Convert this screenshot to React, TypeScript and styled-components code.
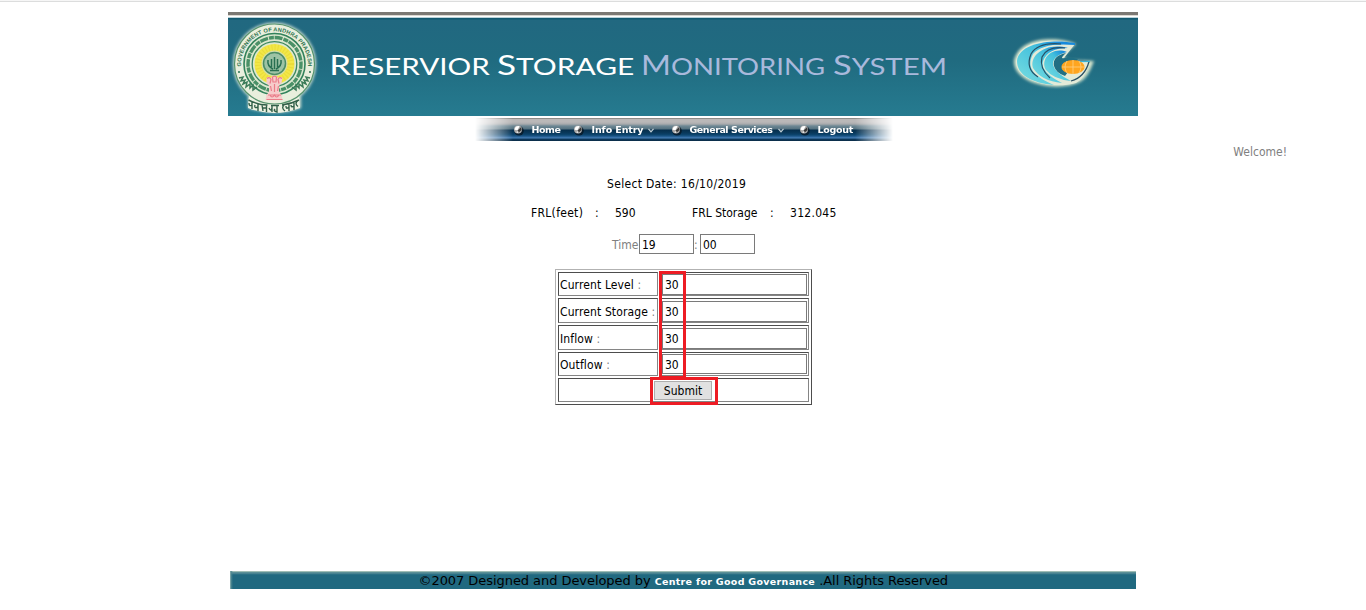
import React from 'react';
import styled, { createGlobalStyle } from 'styled-components';

const Global = createGlobalStyle`
  * { box-sizing: border-box; }
  body { margin: 0; background: #fff; font-family: 'DejaVu Sans Condensed', 'DejaVu Sans', sans-serif; font-stretch: condensed; font-size: 12px; color: #000; }
`;
const Page = styled.div`
  width: 1366px; height: 610px; display: flex; flex-direction: column; align-items: center; overflow: hidden;
`;
const TopStrip = styled.div`width: 100%; height: 2px; background: #f6f6f6; border-bottom: 1px solid #dcdddd; margin-bottom: 10px;`;
const Banner = styled.header`
  width: 910px; height: 104px; flex: none; border-top: 3px solid #7b7873;
  background: linear-gradient(#ded9d2 0 1px, #fff 1px 2px, #b9d3da 2px 3px, #12586f 3px 4px, #216880 5px, #206b80 45%, #267b90 100%);
`;
const MenuBar = styled.nav`
  width: 418px; height: 23px; margin: 2px 0 0 1px; padding-left: 38px; flex: none; display: flex; align-items: center;
  background: linear-gradient(#8d8b88 0 1px, #bab8b8 1px 4px, #a9abad 6px, #6d8794 8px, #54717f 11px, #062f4d 12px, #09395c 15px, #0c4670 17px, #2c659d 19px, #4a83b8 20px, #0c3a60 21px, #0a2b45 23px);
  mask-image: linear-gradient(90deg, transparent 0, #000 38px, #000 calc(100% - 38px), transparent 100%);
`;
const MenuItem = styled.a<{ $w: number; $ls?: string }>`
  width: ${p => p.$w}px; display: flex; align-items: center; color: #fff; font: bold 9.5px 'DejaVu Sans', sans-serif;
  letter-spacing: ${p => p.$ls ?? '0'}; white-space: nowrap;
  svg { flex: none; }
`;
const Welcome = styled.div`align-self: flex-end; margin-right: 79px; height: 22px; line-height: 22px; color: #808080;`;
const Line = styled.div<{ $left: number; $top: number }>`
  align-self: flex-start; margin: ${p => p.$top}px 0 0 ${p => p.$left}px; display: flex; height: 20px; line-height: 20px; white-space: pre;
`;
const Cell = styled.span<{ $w?: number; $gray?: boolean; $ls?: string }>`
  width: ${p => (p.$w ? p.$w + 'px' : 'auto')}; color: ${p => (p.$gray ? '#808080' : '#000')}; letter-spacing: ${p => p.$ls ?? '0'};
  ${p => p.$gray && 'line-height: 22px;'}
`;
const Input = styled.input<{ $w: string; $h: number }>`
  width: ${p => p.$w}; height: ${p => p.$h}px; border: 1px solid #7a7a7a; padding: 1px 2px 0; font: inherit; color: #000; background: #fff; outline: 0; border-radius: 0; display: block;
`;
const FormTable = styled.form`
  position: relative; align-self: flex-start; margin: 15px 0 0 555px; width: 257px; height: 136px; padding: 2px; border: 1px solid; border-color: #b2b2b2 #4d4d4d #4d4d4d #b2b2b2;
  display: grid; grid-template-columns: 100px 149px; grid-template-rows: 24px 25px 25px 24px 24px; gap: 2px;
`;
const FormCell = styled.div<{ $full?: boolean; $drop?: boolean }>`
  border: 1px solid; border-color: #4d4d4d #858585 #858585 #4d4d4d; padding: ${p => (p.$drop ? '2px 1px 0' : '1px')};
  display: flex; align-items: flex-start; white-space: nowrap;
  ${p => p.$full && 'grid-column: 1 / 3; padding: 2px 1px 0 95px;'}
  i { font-style: normal; color: #808080; white-space: pre; }
`;
const Label = styled.label`line-height: 23px; letter-spacing: 0.12px;`;
const Submit = styled.button`
  width: 58px; height: 19px; padding: 1px 0 0; border: 1px solid #adadad; background: #e1e1e1; font: inherit; color: #000;
`;
const Mark = styled.div<{ $x: number; $y: number; $w: number; $h: number }>`
  position: absolute; left: ${p => p.$x}px; top: ${p => p.$y}px; width: ${p => p.$w}px; height: ${p => p.$h}px; border: 3px solid #ed1c24; pointer-events: none;
`;
const Footer = styled.footer`
  width: 906px; height: 18px; flex: none; margin-top: 166px; padding-left: 188.500px; display: flex; white-space: pre; line-height: 19px;
  font-family: 'DejaVu Sans', sans-serif; font-stretch: normal; font-size: 13px; letter-spacing: -0.06px;
  background: linear-gradient(90deg, #9fbdb9 0, #4e8791 1px, transparent 3px), linear-gradient(#9fbdb5 0 1px, #5b8f97 1px 2px, #34768a 3px, #206980 4px);
`;
const Owner = styled.b`font-size: 9.5px; color: #fff; line-height: 21px; width: 160.500px; letter-spacing: 0.31px;`;

const Bullet = () => (
  <svg width="19" height="14" viewBox="0 0 19 14">
    <circle cx="6" cy="7.8" r="4.8" fill="#07131c" opacity=".7" />
    <circle cx="5" cy="6.6" r="4" fill="#a9a9a9" />
    <path d="M1.6 6.8A3.6 3.6 0 0 1 6.6 3.2L4.5 7.3Z" fill="#fff" />
    <path d="M4.6 7.4L8 4.2L8.6 7L5.5 9.8Z" fill="#373737" />
    <path d="M3.2 9.2L5.2 8L5.4 10.2Z" fill="#eee" />
  </svg>
);
const ChevronIcon = styled.svg`margin: 1px 0 0 5px;`;
const Chevron = () => <ChevronIcon width="6" height="5"><path d="M.5 .8l2.5 3L5.5 .8" fill="none" stroke="#c3d0d6" strokeWidth="1.2" /></ChevronIcon>;

const words: [string, string, number, number, string][] = [
  ['R', 'ESERVIOR', 101.3, 160.5, '#fff'], ['S', 'TORAGE', 269, 137.3, '#fff'],
  ['M', 'ONITORING', 413, 184, '#a9b9dc'], ['S', 'YSTEM', 605, 114, '#a9b9dc'],
];
const BannerSvg = styled.svg`display: block;`;
const BannerArt = () => (
  <BannerSvg width="910" height="101" viewBox="0 3 910 101">
    <defs>
      <path id="rim" d="M13.4 58A33.5 33.5 0 1 1 79.6 58" />
      <filter id="glow" x="-20%" y="-20%" width="140%" height="140%"><feGaussianBlur stdDeviation="1.5" /></filter>
      <linearGradient id="wave" x1="0" y1="1" x2="1" y2="0"><stop offset=".2" stopColor="#69d5df" /><stop offset=".6" stopColor="#42bfdd" /><stop offset=".85" stopColor="#1689dc" /></linearGradient>
    </defs>
    <g filter="url(#glow)" fill="#d2e2d4"><circle cx="46.5" cy="52" r="41.5" /><path d="M20 82h53v14q-26 9-53 0z" /></g>
    <path d="M21 83L20 96Q46 106 72 96L71 83z" fill="#edf2e2" />
    <circle cx="46.5" cy="52" r="40" fill="#e9efdd" stroke="#56936d" strokeWidth="1.2" />
    <circle cx="46.5" cy="52" r="30.5" fill="#dce8d0" stroke="#32825b" strokeWidth="1.6" />
    <circle cx="46.5" cy="52" r="26.5" fill="none" stroke="#4a9067" strokeWidth="3.4" strokeDasharray="5 .8 8 1" />
    <circle cx="46.5" cy="52" r="22.3" fill="none" stroke="#3d8861" strokeWidth="1.3" />
    <circle cx="46.5" cy="52" r="20" fill="#f2e747" />
    <circle cx="46.5" cy="52" r="16" fill="none" stroke="#e0ca28" strokeWidth="7" strokeDasharray="1 2" opacity=".4" />
    <circle cx="46.5" cy="51.5" r="13" fill="#d6dfa5" />
    <circle cx="46.5" cy="51.5" r="11" fill="#9dc3a5" stroke="#4c8d67" strokeWidth="1.5" />
    <path d="M46.5 45v12M43.5 47v8M49.5 47v8M40 48q-1 6 5 9M53 48q1 6-5 9M42 58.500h9" fill="none" stroke="#286f51" strokeWidth="1.5" />
    <text fill="#2f7350" fontFamily="Liberation Sans" fontWeight="bold" fontSize="5.6" letterSpacing=".15"><textPath href="#rim" startOffset="50%" textAnchor="middle">GOVERNMENT OF ANDHRA PRADESH</textPath></text>
    <circle cx="11" cy="60" r="1" fill="#286f51" /><circle cx="82" cy="60" r="1" fill="#286f51" />
    <path d="M11 66l4-1-2 4 4-1-2 4 4-2-1 5 4-3 0 4 3-3 0 5 4-3M82 66l-4-1 2 4-4-1 2 4-4-2 1 5-4-3 0 4-3-3 0 5-4-3" fill="none" stroke="#3c7b59" strokeWidth="1.5" />
    <path d="M38.500 66q2-2 4.500 0l1.500-2h4l1.500 2q3-2 4.500 0l-1 5-2.500 3v6l2.500 3 1 5h-17l1-5 2.500-3v-6l-2.500-3z" fill="#f7cccb" />
    <path d="M39 66.500q3-2 4 1l-1 4M54 66.500q-3-2-4 1l1 4M44.500 65q2-1.500 4 0l-.5 5h-3zM42.500 74l1 5M50.500 74l-1 5M46.500 72v8M40 83h13M38.500 87.500h16M42 83q2 4 4.500 0q2 4 4.500 0" fill="none" stroke="#ea7d89" strokeWidth="1.2" />
    <path d="M20.500 88q10 5 19 5M43 93.500h8M54 93q9-1 17-5M24 90v7M21 91q0 4 3 2M30 91v8M27 93q-1 4 3 2M34 93l1 6M38.500 93v7M35 96h3M44 94v6M41 96q2 4 3 0M49 94v6q-4-1-2-3M56 93q-3 3 1 6M61 92v7M58 94q0 4 3 1M66 90v8M63 93q0 3 3 1M70 88.500q-4 3 0 6" fill="none" stroke="#315f48" strokeWidth="1.4" />
    {words.map(([cap, rest, x, w, fill]) => (
      <text key={x} x={x} y="63.2" textLength={w} lengthAdjust="spacingAndGlyphs" fill={fill} fontFamily="Lato" fontSize="27">{cap}<tspan fontSize="23">{rest}</tspan></text>
    ))}
    <path d="M848 32C830 24 792 24 786 48C784 72 830 81 852 70Q860 66 866 49L842 48L834 45z" fill="#d5e4cc" filter="url(#glow)" />
    <path d="M847 32C829 26 792 26 788 49C787 69 824 78 848 71Q857 67 861 50L846 48L836 46z" fill="#e3ead8" />
    <path d="M847 31C826 27 791 30 789 49C789 63 804 71 826 73C808 65 797 57 805 42Q815 30 847 33z" fill="url(#wave)" />
    <path d="M840 36C817 30 801 44 805 56Q813 69 834 71Q812 60 815 49Q820 36 840 36z" fill="url(#wave)" />
    <path d="M839 40C822 34 812 49 818 58Q825 67 843 69Q827 61 825 53Q824 44 839 40z" fill="url(#wave)" />
    <path d="M838 41Q824 44 826 54Q828 61 837 64L850 47L862 49L840 45Q829 49 838 41z" fill="#216f84" />
    <path d="M833 32Q810 30 803 42Q797 57 810 65M837 36Q819 34 814 45Q811 56 822 66M840 48.500l21 1Q857 65 843 69" fill="none" stroke="#284f64" strokeWidth="1.2" />
    <path d="M847 49.500l15 0" stroke="#39b3d6" strokeWidth="1.2" />
    <ellipse cx="845" cy="55" rx="11.5" ry="7" fill="#ffa51f" />
    <path d="M834 55h23M845 48v14M839 49q-4 6 0 12M851 49q4 6 0 12" stroke="#ffd184" fill="none" strokeWidth=".8" />
  </BannerSvg>
);

const rows: [string, number, boolean][] = [['Current Level', 21, false], ['Current Storage', 21, true], ['Inflow', 21, true], ['Outflow', 20, false]];

export default function App() {
  return (
    <Page>
      <Global />
      <TopStrip />
      <Banner><BannerArt /></Banner>
      <MenuBar>
        <MenuItem $w={60} $ls="-0.45px"><Bullet />Home</MenuItem>
        <MenuItem $w={98} $ls="-0.1px"><Bullet />Info Entry<Chevron /></MenuItem>
        <MenuItem $w={128} $ls="-0.45px"><Bullet />General Services<Chevron /></MenuItem>
        <MenuItem $w={60} $ls="-0.3px"><Bullet />Logout</MenuItem>
      </MenuBar>
      <Welcome>Welcome!</Welcome>
      <Line $left={607} $top={11}><Cell $ls="0.32px">Select Date: 16/10/2019</Cell></Line>
      <Line $left={531} $top={9}>
        <Cell $w={64} $ls="0.3px">FRL(feet)</Cell><Cell $w={20}>:</Cell><Cell $w={77}>590</Cell>
        <Cell $w={78}>FRL Storage</Cell><Cell $w={20}>:</Cell><Cell $ls="0.28px">312.045</Cell>
      </Line>
      <Line $left={612} $top={11}>
        <Cell $w={27} $gray>Time</Cell><Input $w="55px" $h={20} defaultValue="19" />
        <Cell $w={6} $gray>:</Cell><Input $w="55px" $h={20} defaultValue="00" />
      </Line>
      <FormTable>
        {rows.map(([label, h, drop]) => (
          <React.Fragment key={label}>
            <FormCell $drop={drop}><Label>{label}<i> :</i></Label></FormCell>
            <FormCell $drop={drop}><Input $w="145px" $h={h} defaultValue="30" /></FormCell>
          </React.Fragment>
        ))}
        <FormCell $full><Submit type="button">Submit</Submit></FormCell>
        <Mark $x={103} $y={1} $w={27} $h={108} />
        <Mark $x={94} $y={107} $w={68} $h={28} />
      </FormTable>
      <Footer>©2007 Designed and Developed by <Owner>Centre for Good Governance</Owner> .All Rights Reserved</Footer>
    </Page>
  );
}
